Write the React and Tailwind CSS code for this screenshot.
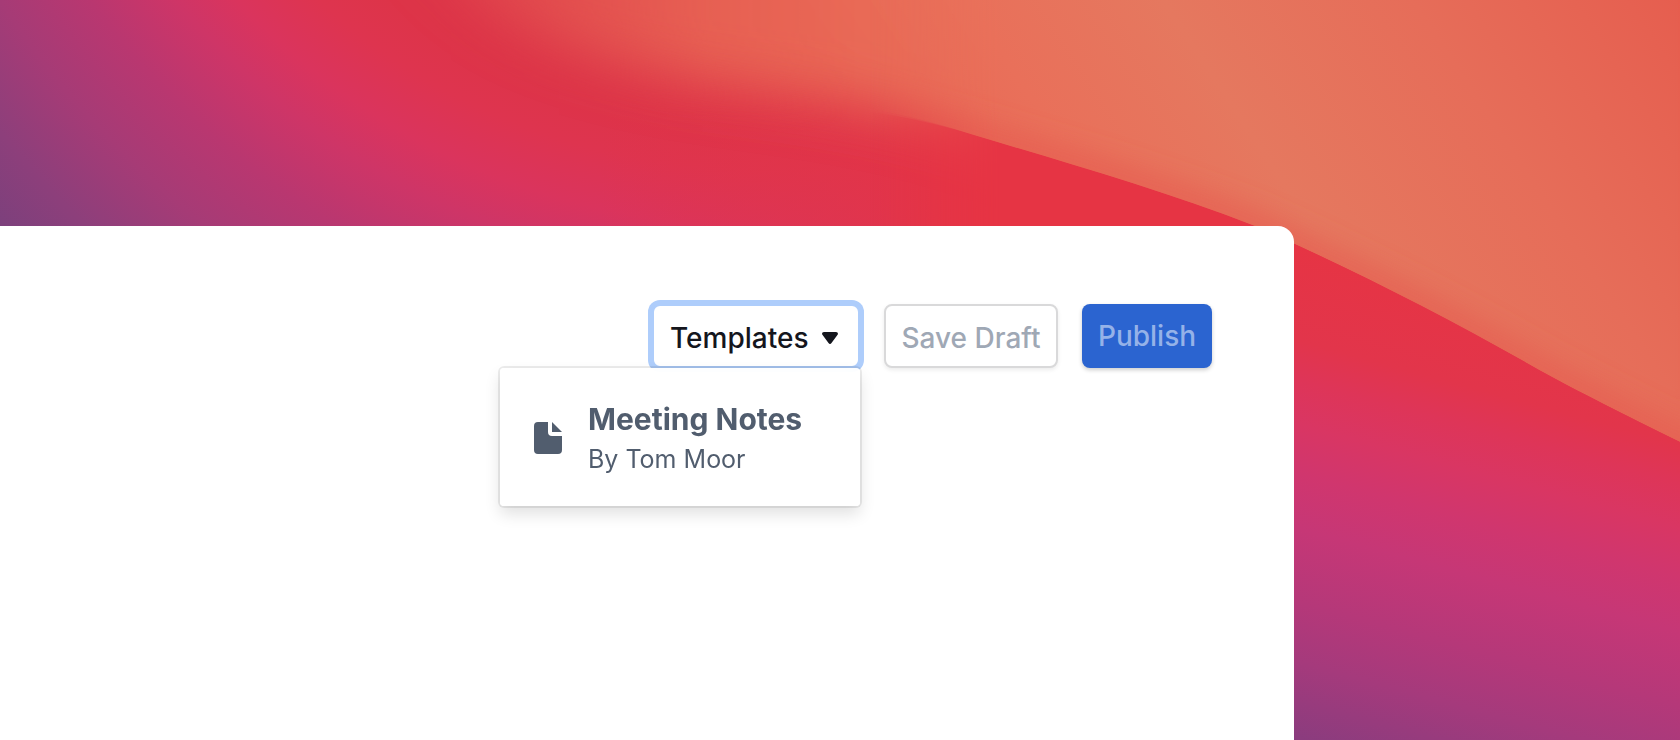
import React from "react";

const RIDGE =
  "M400 -80 C450 10 530 44 630 68 C720 92 850 94 974 135 C1060 161 1160 189 1255 226 C1350 268 1450 319 1539 370 C1590 398 1640 422 1720 462 V-80 Z";

const VALLEY =
  "M820 108 C870 110 920 118 974 135 C1060 161 1160 189 1255 226 C1350 268 1450 319 1539 370 C1590 398 1640 422 1720 462 V740 H820 Z";

function Wallpaper() {
  return (
    <svg
      aria-hidden="true"
      className="absolute inset-0 h-full w-full"
      viewBox="0 0 1680 740"
      preserveAspectRatio="xMaxYMin slice"
    >
      <defs>
        <radialGradient id="dusk" gradientUnits="userSpaceOnUse" cx="752" cy="-477" r="1040">
          <stop offset="0.57" stopColor="#dd3448" />
          <stop offset="0.62" stopColor="#de344f" />
          <stop offset="0.675" stopColor="#da345d" />
          <stop offset="0.72" stopColor="#ce3567" />
          <stop offset="0.785" stopColor="#b93770" />
          <stop offset="0.856" stopColor="#a63b76" />
          <stop offset="0.93" stopColor="#8d3f7b" />
          <stop offset="0.99" stopColor="#7c407c" />
        </radialGradient>
        <linearGradient id="ember" gradientUnits="userSpaceOnUse" x1="600" y1="0" x2="1000" y2="0">
          <stop offset="0" stopColor="#e23547" stopOpacity="0" />
          <stop offset="0.55" stopColor="#e23547" stopOpacity="0.6" />
          <stop offset="1" stopColor="#e63444" stopOpacity="1" />
        </linearGradient>
        <linearGradient id="night" gradientUnits="userSpaceOnUse" x1="1294" y1="245" x2="1169" y2="706">
          <stop offset="0" stopColor="#e63444" />
          <stop offset="0.19" stopColor="#e2354b" />
          <stop offset="0.27" stopColor="#de3558" />
          <stop offset="0.36" stopColor="#d93663" />
          <stop offset="0.46" stopColor="#d0366e" />
          <stop offset="0.57" stopColor="#c63776" />
          <stop offset="0.72" stopColor="#b53879" />
          <stop offset="0.84" stopColor="#a53a7c" />
          <stop offset="1" stopColor="#8a3c7e" />
        </linearGradient>
        <linearGradient id="sun" gradientUnits="userSpaceOnUse" x1="1000" y1="320" x2="1620" y2="-90">
          <stop offset="0" stopColor="#e86755" />
          <stop offset="0.2" stopColor="#e9705a" />
          <stop offset="0.42" stopColor="#e5785f" />
          <stop offset="0.7" stopColor="#e66d59" />
          <stop offset="1" stopColor="#e65e4f" />
        </linearGradient>
        <linearGradient id="softFade" gradientUnits="userSpaceOnUse" x1="430" y1="0" x2="860" y2="0">
          <stop offset="0" stopColor="#fff" stopOpacity="0.2" />
          <stop offset="0.3" stopColor="#fff" stopOpacity="0.5" />
          <stop offset="0.65" stopColor="#fff" stopOpacity="0.85" />
          <stop offset="1" stopColor="#fff" stopOpacity="1" />
        </linearGradient>
        <linearGradient id="crispFade" gradientUnits="userSpaceOnUse" x1="870" y1="0" x2="1000" y2="0">
          <stop offset="0" stopColor="#fff" stopOpacity="0" />
          <stop offset="1" stopColor="#fff" stopOpacity="1" />
        </linearGradient>
        <mask id="softMask" maskUnits="userSpaceOnUse" x="0" y="-80" width="1680" height="820">
          <rect y="-80" width="1680" height="820" fill="url(#softFade)" />
        </mask>
        <mask id="crispMask" maskUnits="userSpaceOnUse" x="0" y="-80" width="1680" height="820">
          <rect y="-80" width="1680" height="820" fill="url(#crispFade)" />
        </mask>
        <filter id="haze" filterUnits="userSpaceOnUse" x="200" y="-200" width="1700" height="900">
          <feGaussianBlur stdDeviation="26" />
        </filter>
        <filter id="rim" filterUnits="userSpaceOnUse" x="200" y="-200" width="1600" height="900">
          <feGaussianBlur stdDeviation="14" />
        </filter>
        <clipPath id="ridgeClip">
          <path d={RIDGE} />
        </clipPath>
      </defs>
      <rect width="1680" height="740" fill="url(#dusk)" />
      <rect x="580" width="1100" height="740" fill="url(#ember)" />
      <g mask="url(#softMask)">
        <path d={RIDGE} fill="url(#sun)" filter="url(#haze)" />
      </g>
      <g mask="url(#crispMask)">
        <path d={VALLEY} fill="#e63444" />
        <g clipPath="url(#ridgeClip)">
          <path d={RIDGE} fill="url(#sun)" />
          <path d={RIDGE} fill="none" stroke="#e55a50" strokeOpacity="0.75" strokeWidth="24" filter="url(#rim)" />
        </g>
      </g>
      <path d="M1270 233 C1360 273 1450 319 1539 370 C1590 398 1640 422 1720 462 V740 H1270 Z" fill="url(#night)" />
    </svg>
  );
}

function DocumentIcon() {
  return (
    <svg aria-hidden="true" className="h-8 w-7 shrink-0" viewBox="0 0 28 32" fill="currentColor">
      <path d="M4 0H14V10a4 4 0 0 0 4 4H28V28a4 4 0 0 1-4 4H4a4 4 0 0 1-4-4V4a4 4 0 0 1 4-4Z" />
      <path d="M18 0L28 10H18Z" />
    </svg>
  );
}

function CaretIcon() {
  return (
    <svg aria-hidden="true" className="h-3 w-4" viewBox="0 0 16 12" fill="currentColor">
      <path d="M2 0H14C15.800 0 16.500 1.800 15.400 3.100L9.500 11C8.700 12.200 7.300 12.200 6.500 11L0.600 3.100C-0.500 1.800 0.200 0 2 0Z" />
    </svg>
  );
}

export default function App() {
  return (
    <div className="relative flex min-h-screen flex-col overflow-hidden bg-[#d53561] pt-[226px] font-['Inter','Liberation_Sans',sans-serif]">
      <Wallpaper />
      <main className="relative mr-[386px] flex-1 rounded-tr-2xl bg-white">
        <header className="flex justify-end gap-6 pt-[78px] pr-[82px]">
          <div className="relative">
            <button
              type="button"
              aria-haspopup="menu"
              aria-expanded="true"
              className="flex h-16 w-52 items-center justify-between rounded-lg border-2 border-[#aecdfb] bg-white pt-1 pr-5 pl-4 text-[28px] leading-8 font-medium text-[#14161d] ring-4 ring-[#aecdfb]"
            >
              Templates
              <CaretIcon />
            </button>
            <div
              role="menu"
              className="absolute top-full right-0 w-[360px] rounded bg-white/95 shadow-[0_0_0_2px_rgba(0,0,0,0.08),0_8px_16px_rgba(0,0,0,0.12)] backdrop-blur-xl"
            >
              <button
                type="button"
                role="menuitem"
                className="flex w-full items-center gap-[26px] pt-[30px] pb-7 pl-[34px] text-left text-[#515d6e]"
              >
                <DocumentIcon />
                <span className="flex flex-col whitespace-nowrap">
                  <span className="text-[30px] leading-[42px] font-bold">Meeting Notes</span>
                  <span className="text-[25px] leading-[38px]">By Tom Moor</span>
                </span>
              </button>
            </div>
          </div>
          <button
            type="button"
            className="h-16 w-[174px] rounded-lg border-2 border-[#d9d9da] bg-white pt-1 text-[28px] leading-8 font-medium whitespace-nowrap text-[#9fa8b5] shadow-[0_2px_4px_rgba(0,0,0,0.08)]"
          >
            Save Draft
          </button>
          <button
            type="button"
            className="h-16 w-[130px] rounded-lg bg-[#2b64d0] text-[28px] leading-8 font-medium text-[#95b2e8] shadow-[0_2px_4px_rgba(0,0,0,0.2)]"
          >
            Publish
          </button>
        </header>
      </main>
    </div>
  );
}
